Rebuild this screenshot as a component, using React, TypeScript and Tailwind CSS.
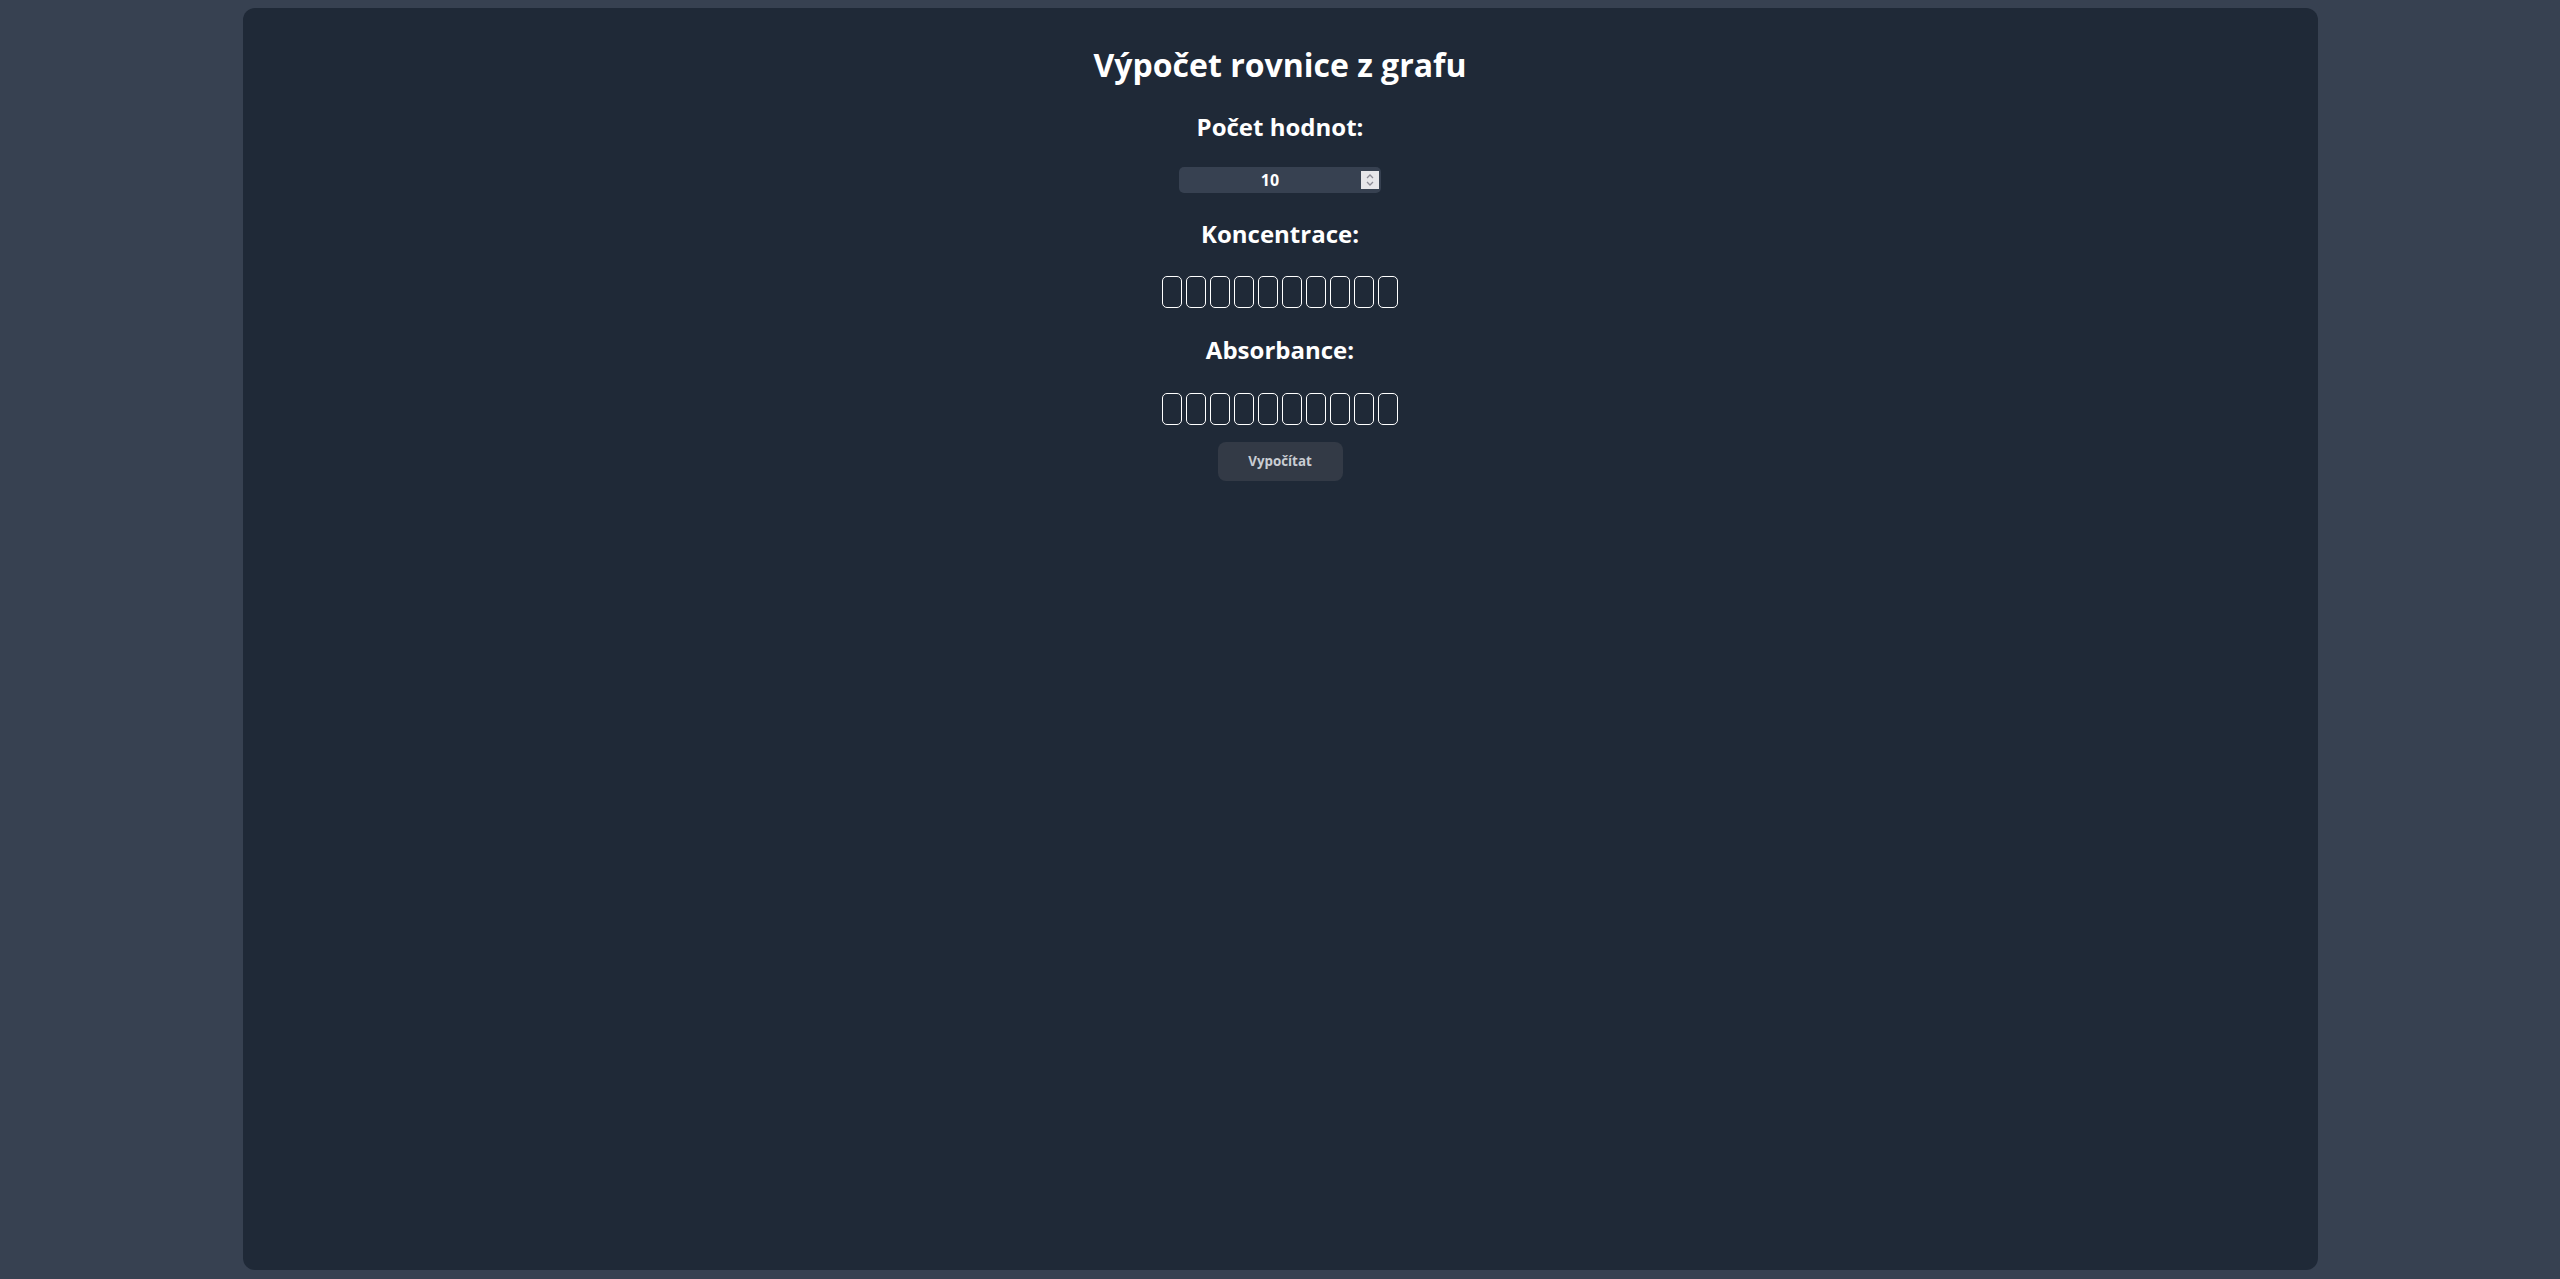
import { useState } from "react";

const Spinner = () => (
  <span className="absolute right-[2px] top-[4px] flex h-[18px] w-[18px] items-center justify-center bg-[#e6e6ea]">
    <svg width="10" height="14" viewBox="0 0 10 14" fill="none">
      <path d="M2 5 L5 2 L8 5" stroke="#8b8b96" strokeWidth="1.3" />
      <path d="M2 9 L5 12 L8 9" stroke="#8b8b96" strokeWidth="1.3" />
    </svg>
  </span>
);

const Boxes = ({ count }: { count: number }) => (
  <div className="flex gap-1">
    {Array.from({ length: count }).map((_, i) => (
      <input
        key={i}
        type="text"
        className="h-8 w-5 rounded-[5px] border border-white bg-transparent text-white outline-none"
      />
    ))}
  </div>
);

export default function App() {
  // pocet hodnot
  const [pocet, setPocet] = useState("10");
  const n = Number(pocet) || 0;

  return (
    <div
      className="min-h-screen bg-[#374151] pt-2"
      style={{ fontFamily: "'Open Sans', 'Liberation Sans', sans-serif" }}
    >
      <main className="mx-auto flex h-[1262px] w-[2075px] flex-col items-center rounded-xl bg-[#1f2937] pt-[35px] text-white">
        <h1 className="text-[32px] font-bold leading-[44px]">Výpočet rovnice z grafu</h1>

        <h2 className="mt-[23px] text-2xl font-bold leading-[33px]">Počet hodnot:</h2>
        <div className="relative mt-6 h-[26px] w-[202px] rounded-[5px] bg-[#374151]">
          <input
            type="text"
            value={pocet}
            onChange={(e) => setPocet(e.target.value)}
            className="h-full w-[182px] bg-transparent text-center text-base font-bold text-white outline-none"
          />
          <Spinner />
        </div>

        <h2 className="mt-6 text-2xl font-bold leading-[33px]">Koncentrace:</h2>
        <div className="mt-[26px]">
          <Boxes count={n} />
        </div>

        <h2 className="mt-[25px] text-2xl font-bold leading-[33px]">Absorbance:</h2>
        <div className="mt-[27px]">
          <Boxes count={n} />
        </div>

        <button className="mt-[17px] h-[39px] w-[125px] rounded-lg bg-[#333a46] text-[13.33px] font-bold text-[#c9cdd3]">
          Vypočítat
        </button>
      </main>
    </div>
  );
}
